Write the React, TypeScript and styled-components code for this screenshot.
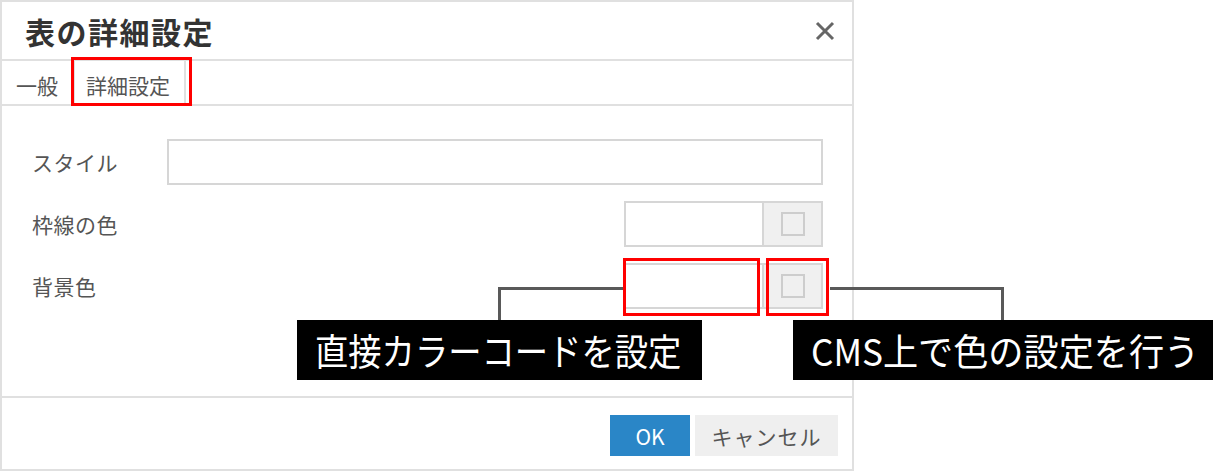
import React from "react";
import styled, { createGlobalStyle } from "styled-components";

const Global = createGlobalStyle`
  html, body { margin: 0; padding: 0; background: #fff; }
  body { font-family: "Noto Sans CJK JP", "Noto Sans", sans-serif; }
`;

const Canvas = styled.div`
  position: relative;
  width: 1221px;
  height: 471px;
  overflow: hidden;
  background: #fff;
`;

const Dialog = styled.div`
  width: 854px;
  height: 471px;
  box-sizing: border-box;
  border: 2px solid #e0e0e0;
  display: flex;
  flex-direction: column;
  background: #fff;
`;

const Header = styled.div`
  height: 57px;
  flex: none;
  display: flex;
  align-items: center;
  justify-content: space-between;
  padding: 0 17px 0 23px;
  border-bottom: 2px solid #e0e0e0;
`;

const Title = styled.h1`
  margin: 0;
  font-size: 30px;
  font-weight: 700;
  color: #333;
  letter-spacing: 1.5px;
  line-height: 1;
`;

const Close = styled.button`
  border: none;
  background: none;
  padding: 0;
  width: 20px;
  height: 20px;
  display: flex;
  cursor: pointer;
`;

const TabBar = styled.div`
  height: 43px;
  flex: none;
  display: flex;
  align-items: stretch;
  border-bottom: 2px solid #e0e0e0;
`;

const Tab = styled.div<{ $active?: boolean }>`
  display: flex;
  align-items: center;
  padding: 5px ${(p) => (p.$active ? "14px" : "13px")} 0 ${(p) => (p.$active ? "11px" : "12px")};
  font-size: 21px;
  color: #555;
  background: #fff;
  border-left: 2px solid ${(p) => (p.$active ? "#e0e0e0" : "transparent")};
  border-right: 2px solid ${(p) => (p.$active ? "#e0e0e0" : "transparent")};
`;

const Body = styled.div`
  flex: 1;
  display: flex;
  flex-direction: column;
  gap: 16px;
  padding: 33px 29px 0 30px;
  border-bottom: 2px solid #e0e0e0;
`;

const Row = styled.div`
  display: flex;
  align-items: center;
  height: 46px;
`;

const Label = styled.label`
  width: 135px;
  flex: none;
  font-size: 21px;
  letter-spacing: 0.5px;
  color: #555;
`;

const TextInput = styled.input`
  flex: 1;
  height: 46px;
  box-sizing: border-box;
  border: 2px solid #d6d6d6;
  background: #fff;
  outline: none;
`;

const ColorGroup = styled.div`
  margin-left: auto;
  display: flex;
  height: 46px;
  box-sizing: border-box;
  border: 2px solid #d6d6d6;
`;

const ColorField = styled.input`
  width: 136px;
  border: none;
  border-right: 2px solid #d6d6d6;
  background: #fff;
  outline: none;
  padding: 0;
`;

const Swatch = styled.button`
  width: 57px;
  border: none;
  background: #f0f0f0;
  display: flex;
  align-items: center;
  justify-content: center;
  padding: 0;
  &::after {
    content: "";
    width: 24px;
    height: 24px;
    box-sizing: border-box;
    border: 2px solid #cdcdcd;
  }
`;

const Footer = styled.div`
  flex: none;
  height: 71px;
  box-sizing: border-box;
  display: flex;
  justify-content: flex-end;
  align-items: flex-start;
  gap: 5px;
  padding: 17px 14px 0 0;
`;

const Button = styled.button<{ $primary?: boolean }>`
  height: 41px;
  border: none;
  padding: 0;
  width: ${(p) => (p.$primary ? "80px" : "143px")};
  background: ${(p) => (p.$primary ? "#2a86c7" : "#efefef")};
  color: ${(p) => (p.$primary ? "#fff" : "#555")};
  font-family: "Noto Sans CJK JP", sans-serif;
  font-size: 21px;
  letter-spacing: ${(p) => (p.$primary ? "0" : "1px")};
`;

const Overlay = styled.svg`
  position: absolute;
  left: 0;
  top: 0;
  pointer-events: none;
`;

const Callout = styled.div<{ $left: number; $width: number }>`
  position: absolute;
  top: 320px;
  left: ${(p) => p.$left}px;
  width: ${(p) => p.$width}px;
  height: 60px;
  background: #000;
  color: #fff;
  display: flex;
  align-items: center;
  padding-left: 18px;
  box-sizing: border-box;
  overflow: hidden;
`;

const CalloutText = styled.span<{ $scale: number }>`
  display: inline-block;
  white-space: nowrap;
  font-size: 37px;
  line-height: 1;
  transform: scaleX(${(p) => p.$scale});
  transform-origin: left center;
`;

export default function App() {
  return (
    <>
      <Global />
      <Canvas>
        <Dialog>
          <Header>
            <Title>表の詳細設定</Title>
            <Close aria-label="close">
              <svg width="20" height="20" viewBox="0 0 20 20">
                <path d="M2 2 L18 18 M18 2 L2 18" stroke="#666" strokeWidth="3" />
              </svg>
            </Close>
          </Header>
          <TabBar>
            <Tab>一般</Tab>
            <Tab $active>詳細設定</Tab>
          </TabBar>
          <Body>
            <Row>
              <Label>スタイル</Label>
              <TextInput />
            </Row>
            <Row>
              <Label>枠線の色</Label>
              <ColorGroup>
                <ColorField />
                <Swatch />
              </ColorGroup>
            </Row>
            <Row>
              <Label>背景色</Label>
              <ColorGroup>
                <ColorField />
                <Swatch />
              </ColorGroup>
            </Row>
          </Body>
          <Footer>
            <Button $primary>OK</Button>
            <Button>キャンセル</Button>
          </Footer>
        </Dialog>

        <Overlay width="1221" height="471" viewBox="0 0 1221 471">
          <g fill="none" stroke="#ff0000" strokeWidth="3">
            <rect x="72.5" y="58.5" width="118" height="46" />
            <rect x="624.5" y="259.5" width="134" height="55" />
            <rect x="767.5" y="259.5" width="60" height="55" />
          </g>
          <g fill="none" stroke="#595959" strokeWidth="3">
            <polyline points="499.5,321 499.5,288.5 623,288.5" />
            <polyline points="830,288.5 1002.5,288.5 1002.5,321" />
          </g>
        </Overlay>

        <Callout $left={297} $width={405}>
          <CalloutText $scale={0.9}>直接カラーコードを設定</CalloutText>
        </Callout>
        <Callout $left={793} $width={420}>
          <CalloutText $scale={0.95}>CMS上で色の設定を行う</CalloutText>
        </Callout>
      </Canvas>
    </>
  );
}
